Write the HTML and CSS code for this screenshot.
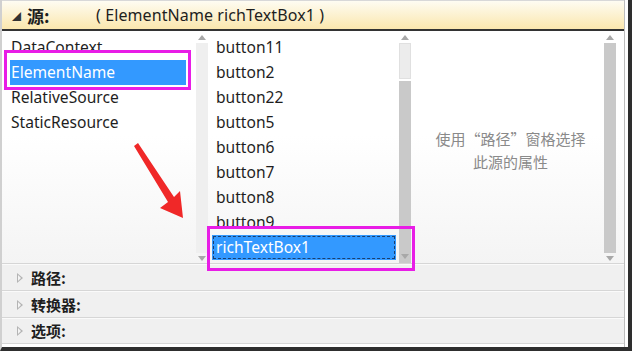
FILE: index.html
```html
<!DOCTYPE html>
<html lang="zh">
<head>
<meta charset="utf-8">
<link rel="stylesheet" href="styles.css">
</head>
<body>
<div class="frame">
  <div class="panel">
    <div class="header">
      <span class="expander">◢</span>
      <span class="title">源:</span>
      <span class="value">( ElementName richTextBox1 )</span>
    </div>
    <div class="main">
      <div class="list list1">
        <div class="item">DataContext</div>
        <div class="item selected">ElementName</div>
        <div class="item">RelativeSource</div>
        <div class="item">StaticResource</div>
      </div>
      <div class="scroll scroll1">
        <span class="arrow up"></span>
        <span class="track light"></span>
        <span class="arrow down"></span>
      </div>
      <div class="list list2">
        <div class="item">button11</div>
        <div class="item">button2</div>
        <div class="item">button22</div>
        <div class="item">button5</div>
        <div class="item">button6</div>
        <div class="item">button7</div>
        <div class="item">button8</div>
        <div class="item">button9</div>
        <div class="item selected focused">richTextBox1</div>
      </div>
      <div class="scroll scroll2">
        <span class="arrow up"></span>
        <span class="track2">
          <span class="lightpart"></span>
          <span class="thumb"></span>
        </span>
        <span class="arrow down over"></span>
      </div>
      <div class="hint">
        <p>使用“路径”窗格选择<br>此源的属性</p>
      </div>
      <div class="scroll scroll3">
        <span class="arrow up"></span>
        <span class="track gray"></span>
        <span class="arrow down"></span>
      </div>
    </div>
    <div class="sections">
      <div class="section"><span class="tri"></span>路径:</div>
      <div class="section"><span class="tri"></span>转换器:</div>
      <div class="section"><span class="tri"></span>选项:</div>
    </div>
  </div>
  <div class="mark mark1"></div>
  <div class="mark mark2"></div>
  <svg class="redarrow" width="636" height="354" viewBox="0 0 636 354">
    <polygon points="134,146 138,143 174,197 180,191 183,218 160,208 168,202" fill="#f02828"/>
  </svg>
</div>
</body>
</html>
```

FILE: styles.css
```css
* { box-sizing: border-box; }
html, body { margin: 0; padding: 0; background: #ffffff; }
body { width: 636px; height: 354px; overflow: hidden; font-family: "Noto Sans", "Noto Sans CJK SC", sans-serif; }

.frame { position: relative; width: 636px; height: 354px; }

.panel {
  width: 632px;
  height: 351px;
  border-left: 2px solid #d0d0d0;
  border-right: 4px solid #2e2e2e;
  border-bottom: 4px solid #2e2e2e;
  box-shadow: inset -3px 0 0 #ffffff, inset -4px 0 0 #bdbdbd, inset 0 -3px 0 #ffffff, inset 0 -4px 0 #bdbdbd;
  display: flex;
  flex-direction: column;
  background: #f0f0f0;
}

.header {
  height: 31px;
  background: linear-gradient(#fefcf2, #fbe7ae);
  border-bottom: 2px solid #333333;
  border-top: 1px solid #d8d8d8;
  display: flex;
  align-items: center;
  font-size: 16px;
  color: #1e1e1e;
  padding-left: 10px;
  margin-right: 4px;
}
.expander { font-size: 9px; color: #333; margin-right: 6px; margin-top: 3px; }
.title { font-weight: bold; width: 69px; font-size: 17px; font-family: "Noto Sans CJK SC", sans-serif; }
.value { letter-spacing: 0.1px; }

.main {
  height: 232px;
  display: flex;
  background: linear-gradient(#ffffff 45%, #f4f4f4);
  margin-right: 4px;
  overflow: hidden;
}

.list { padding-top: 4px; font-size: 15.6px; color: #1e1e1e; overflow: hidden; }
.item { height: 25px; line-height: 25px; white-space: nowrap; }
.list1 { width: 194px; padding-left: 8px; padding-right: 10px; }
.list1 .item { padding-left: 1px; }
.list2 { width: 190px; padding-left: 4px; padding-right: 2px; }
.list2 .item { padding-left: 4px; }
.selected { background: #3399ff; color: #ffffff; }
.focused { outline: 1px dashed #1b3f6e; outline-offset: -2px; }

.scroll { display: flex; flex-direction: column; align-items: center; position: relative; }
.scroll1 { width: 12px; }
.scroll2 { width: 14px; }
.scroll3 { width: 14px; margin-right: 4px; }

.arrow { width: 0; height: 0; border-left: 4px solid transparent; border-right: 4px solid transparent; flex: none; }
.arrow.up { border-bottom: 5px solid #a8a8a8; margin: 4px 0 3px; }
.arrow.down { border-top: 5px solid #a8a8a8; margin: 3px 0 2px; }
.arrow.over { position: absolute; bottom: 2px; }

.track { flex: 1; width: 12px; }
.track.light { background: #efefef; }
.track.gray { background: #c9c9c9; width: 12px; }
.track2 { flex: 1; width: 12px; display: flex; flex-direction: column; }
.lightpart { height: 36px; background: #ececec; border: 1px solid #e0e0e0; margin-bottom: 2px; }
.thumb { flex: 1; background: #c9c9c9; margin-bottom: -20px; }

.hint { width: 191px; display: flex; align-items: center; justify-content: center; }
.hint p {
  margin: 5px 0 0;
  text-align: center;
  font-family: "Noto Sans CJK SC", sans-serif;
  font-size: 15px;
  line-height: 23px;
  color: #8a8a8a;
  padding-left: 6px;
  white-space: nowrap;
}

.sections { flex: 1; margin-right: 4px; }
.section {
  height: 27px;
  border-top: 1px solid #d6d6d6;
  box-shadow: inset 0 1px 0 #fafafa;
  display: flex;
  align-items: center;
  padding-left: 15px;
  font-family: "Noto Sans CJK SC", sans-serif;
  font-size: 15px;
  font-weight: bold;
  color: #1e1e1e;
}
.section:last-child { border-bottom: 1px solid #d6d6d6; }
.tri {
  width: 6px; height: 10px;
  margin-right: 8px;
  margin-top: 1px;
  position: relative;
}
.tri::before {
  content: "";
  position: absolute;
  left: 0; top: 0;
  border-top: 5px solid transparent;
  border-bottom: 5px solid transparent;
  border-left: 6px solid #b4b4b4;
}
.tri::after {
  content: "";
  position: absolute;
  left: 1px; top: 2px;
  border-top: 3px solid transparent;
  border-bottom: 3px solid transparent;
  border-left: 3px solid #f4f4f4;
}

.mark { position: absolute; border: 3px solid #e81de6; }
.mark1 { left: 4px; top: 50px; width: 187px; height: 40px; }
.mark2 { left: 207px; top: 226px; width: 208px; height: 45px; }

.redarrow { position: absolute; left: 0; top: 0; pointer-events: none; }
```
